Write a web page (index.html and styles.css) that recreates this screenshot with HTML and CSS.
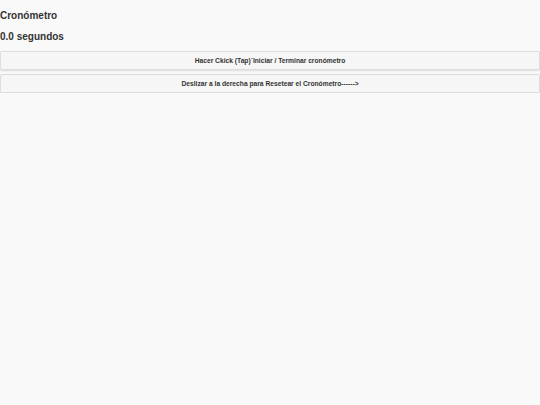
FILE: index.html
```html
<!DOCTYPE html>
<html>
<head>
<meta charset="utf-8">
<link rel="stylesheet" href="styles.css">
</head>
<body>
<div class="page">
  <h1 class="title">Cronómetro</h1>
  <h2 class="time">0.0 segundos</h2>
  <div class="btn btn-first">Hacer Ckick (Tap)´Iniciar / Terminar cronómetro</div>
  <div class="btn">Deslizar a la derecha para Resetear el Cronómetro------&gt;</div>
</div>
</body>
</html>
```
FILE: styles.css
```css
html, body {
  margin: 0;
  padding: 0;
  background: #f9f9f9;
}
body {
  font-family: "Liberation Sans", Arial, sans-serif;
  color: #333;
}
.page {
  display: flex;
  flex-direction: column;
}
.title {
  font-size: 10px;
  font-weight: bold;
  margin: 9px 0 0 0;
  line-height: 13px;
}
.time {
  font-size: 10px;
  font-weight: bold;
  margin: 8px 0 0 0;
  line-height: 13px;
}
.btn {
  margin-top: 4px;
  background: #f6f6f6;
  border: 1px solid #ddd;
  border-radius: 2px;
  box-shadow: 0 1px 2px rgba(0,0,0,0.12);
  font-size: 6.7px;
  font-weight: bold;
  text-align: center;
  line-height: 17px;
  color: #333;
}
.btn-first { margin-top: 8px; }
```
